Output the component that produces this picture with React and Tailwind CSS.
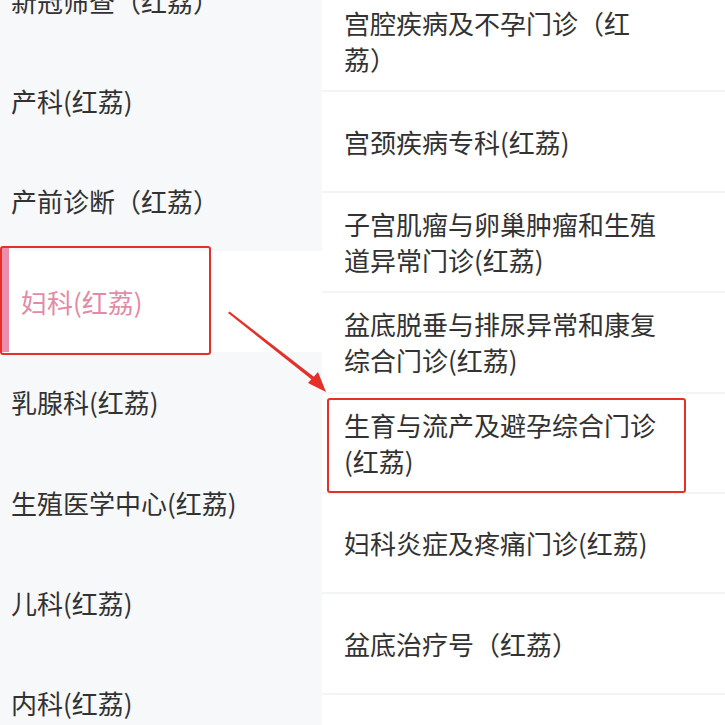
import React from "react";

const leftItems = [
  "新冠筛查（红荔）",
  "产科(红荔)",
  "产前诊断（红荔）",
  "妇科(红荔)",
  "乳腺科(红荔)",
  "生殖医学中心(红荔)",
  "儿科(红荔)",
  "内科(红荔)",
];

const rightItems = [
  "宫腔疾病及不孕门诊（红荔）",
  "宫颈疾病专科(红荔)",
  "子宫肌瘤与卵巢肿瘤和生殖道异常门诊(红荔)",
  "盆底脱垂与排尿异常和康复综合门诊(红荔)",
  "生育与流产及避孕综合门诊(红荔)",
  "妇科炎症及疼痛门诊(红荔)",
  "盆底治疗号（红荔）",
  "",
];

export default function App() {
  return (
    <div
      className="relative w-[725px] h-[725px] overflow-hidden bg-white text-[26px] text-[#323233]"
      style={{ fontFamily: '"Noto Sans CJK SC", "Noto Sans", sans-serif' }}
    >
      <div className="flex h-full">
        <div className="w-[322px] shrink-0 bg-[#f7f8fa] shadow-[1px_0_3px_rgba(0,0,0,0.04)]">
          <div className="-mt-[50px]">
            {leftItems.map((t, i) =>
              i === 3 ? (
                <div
                  key={i}
                  className="h-[100.4px] flex items-stretch bg-white text-[#e48aa8]"
                >
                  <div className="ml-[1px] -mt-[3px] w-[8px] bg-[#eb8dab]" />
                  <div className="flex items-center pl-[12px]">{t}</div>
                </div>
              ) : (
                <div key={i} className="h-[100.4px] flex items-center pl-[11px]">
                  {t}
                </div>
              )
            )}
          </div>
        </div>
        <div className="flex-1 bg-white">
          <div className="-mt-[8px]">
            {rightItems.map((t, i) => (
              <div
                key={i}
                className="h-[100.4px] flex items-center pl-[22px] pr-[60px] border-b-2 border-[#f3f4f6] leading-[36px]"
              >
                <span>{t}</span>
              </div>
            ))}
          </div>
        </div>
      </div>

      {/* annotations */}
      <div className="absolute left-[0px] top-[246px] w-[211px] h-[109px] border-[2.5px] border-[#e5302a] rounded-[3px]" />
      <div className="absolute left-[327px] top-[398px] w-[359px] h-[95px] border-[2.5px] border-[#e5302a] rounded-[3px]" />
      <svg
        className="absolute left-0 top-0"
        width="725"
        height="725"
        viewBox="0 0 725 725"
      >
        <polygon points="228,313 229.5,311.5 318,380 316,383" fill="#e5302a" />
        <polygon points="326,392 308,383 318,372" fill="#e5302a" />
      </svg>
    </div>
  );
}
